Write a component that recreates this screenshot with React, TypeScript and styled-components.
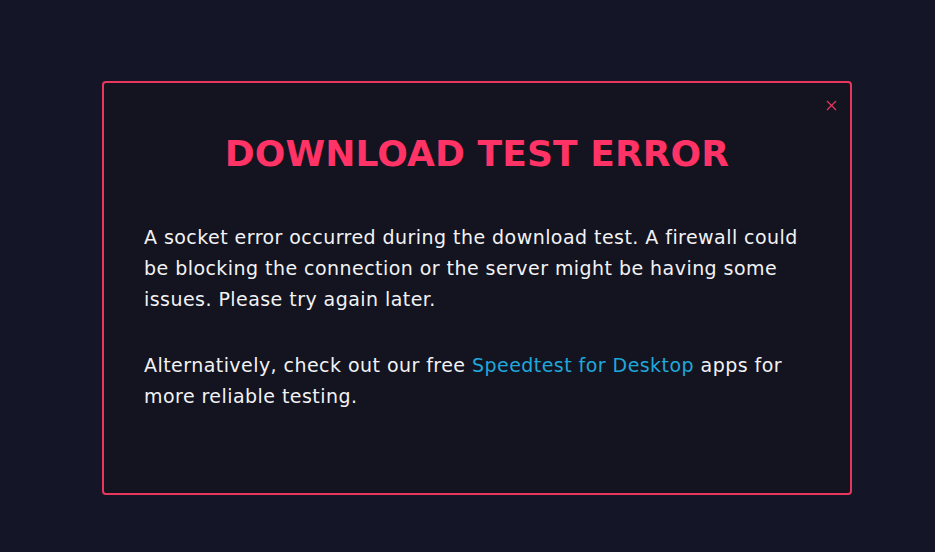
import React from "react";
import styled, { createGlobalStyle } from "styled-components";

const GlobalStyle = createGlobalStyle`
  html, body {
    margin: 0;
    padding: 0;
    background: #141526;
  }
  body {
    font-family: "DejaVu Sans", "Open Sans", sans-serif;
  }
`;

const Page = styled.main`
  min-height: 552px;
  padding-top: 81px;
  box-sizing: border-box;
`;

const Modal = styled.section`
  position: relative;
  width: 750px;
  height: 414px;
  margin: 0 0 0 102px;
  box-sizing: border-box;
  border: 2px solid #e8365f;
  border-radius: 4px;
  background: #13141f;
  padding: 50px 40px 0 40px;
`;

const CloseButton = styled.button`
  position: absolute;
  top: 14px;
  right: 11px;
  width: 16px;
  height: 16px;
  padding: 0;
  border: none;
  background: none;
  cursor: pointer;
  display: flex;
  align-items: center;
  justify-content: center;
`;

const Title = styled.h1`
  margin: 0 0 47px;
  text-align: center;
  font-size: 36px;
  line-height: 42px;
  font-weight: 700;
  color: #ff3366;
  letter-spacing: 0.1px;
`;

const Text = styled.p`
  margin: 0 0 35px;
  font-size: 19px;
  line-height: 31px;
  letter-spacing: 0.45px;
  color: #f2f2f5;
`;

const Link = styled.a`
  color: #1fa7db;
  text-decoration: none;
`;

const App = () => {
  return (
    <Page>
      <GlobalStyle />
      <Modal>
        <CloseButton aria-label="Close">
          <svg width="11" height="11" viewBox="0 0 11 11">
            <path d="M1 1L10 10M10 1L1 10" stroke="#e8365f" strokeWidth="1.2" />
          </svg>
        </CloseButton>
        <Title>DOWNLOAD TEST ERROR</Title>
        <Text>
          A socket error occurred during the download test. A firewall could be
          blocking the connection or the server might be having some issues.
          Please try again later.
        </Text>
        <Text>
          Alternatively, check out our free{" "}
          <Link href="#">Speedtest for Desktop</Link> apps for more reliable
          testing.
        </Text>
      </Modal>
    </Page>
  );
};

export default App;
